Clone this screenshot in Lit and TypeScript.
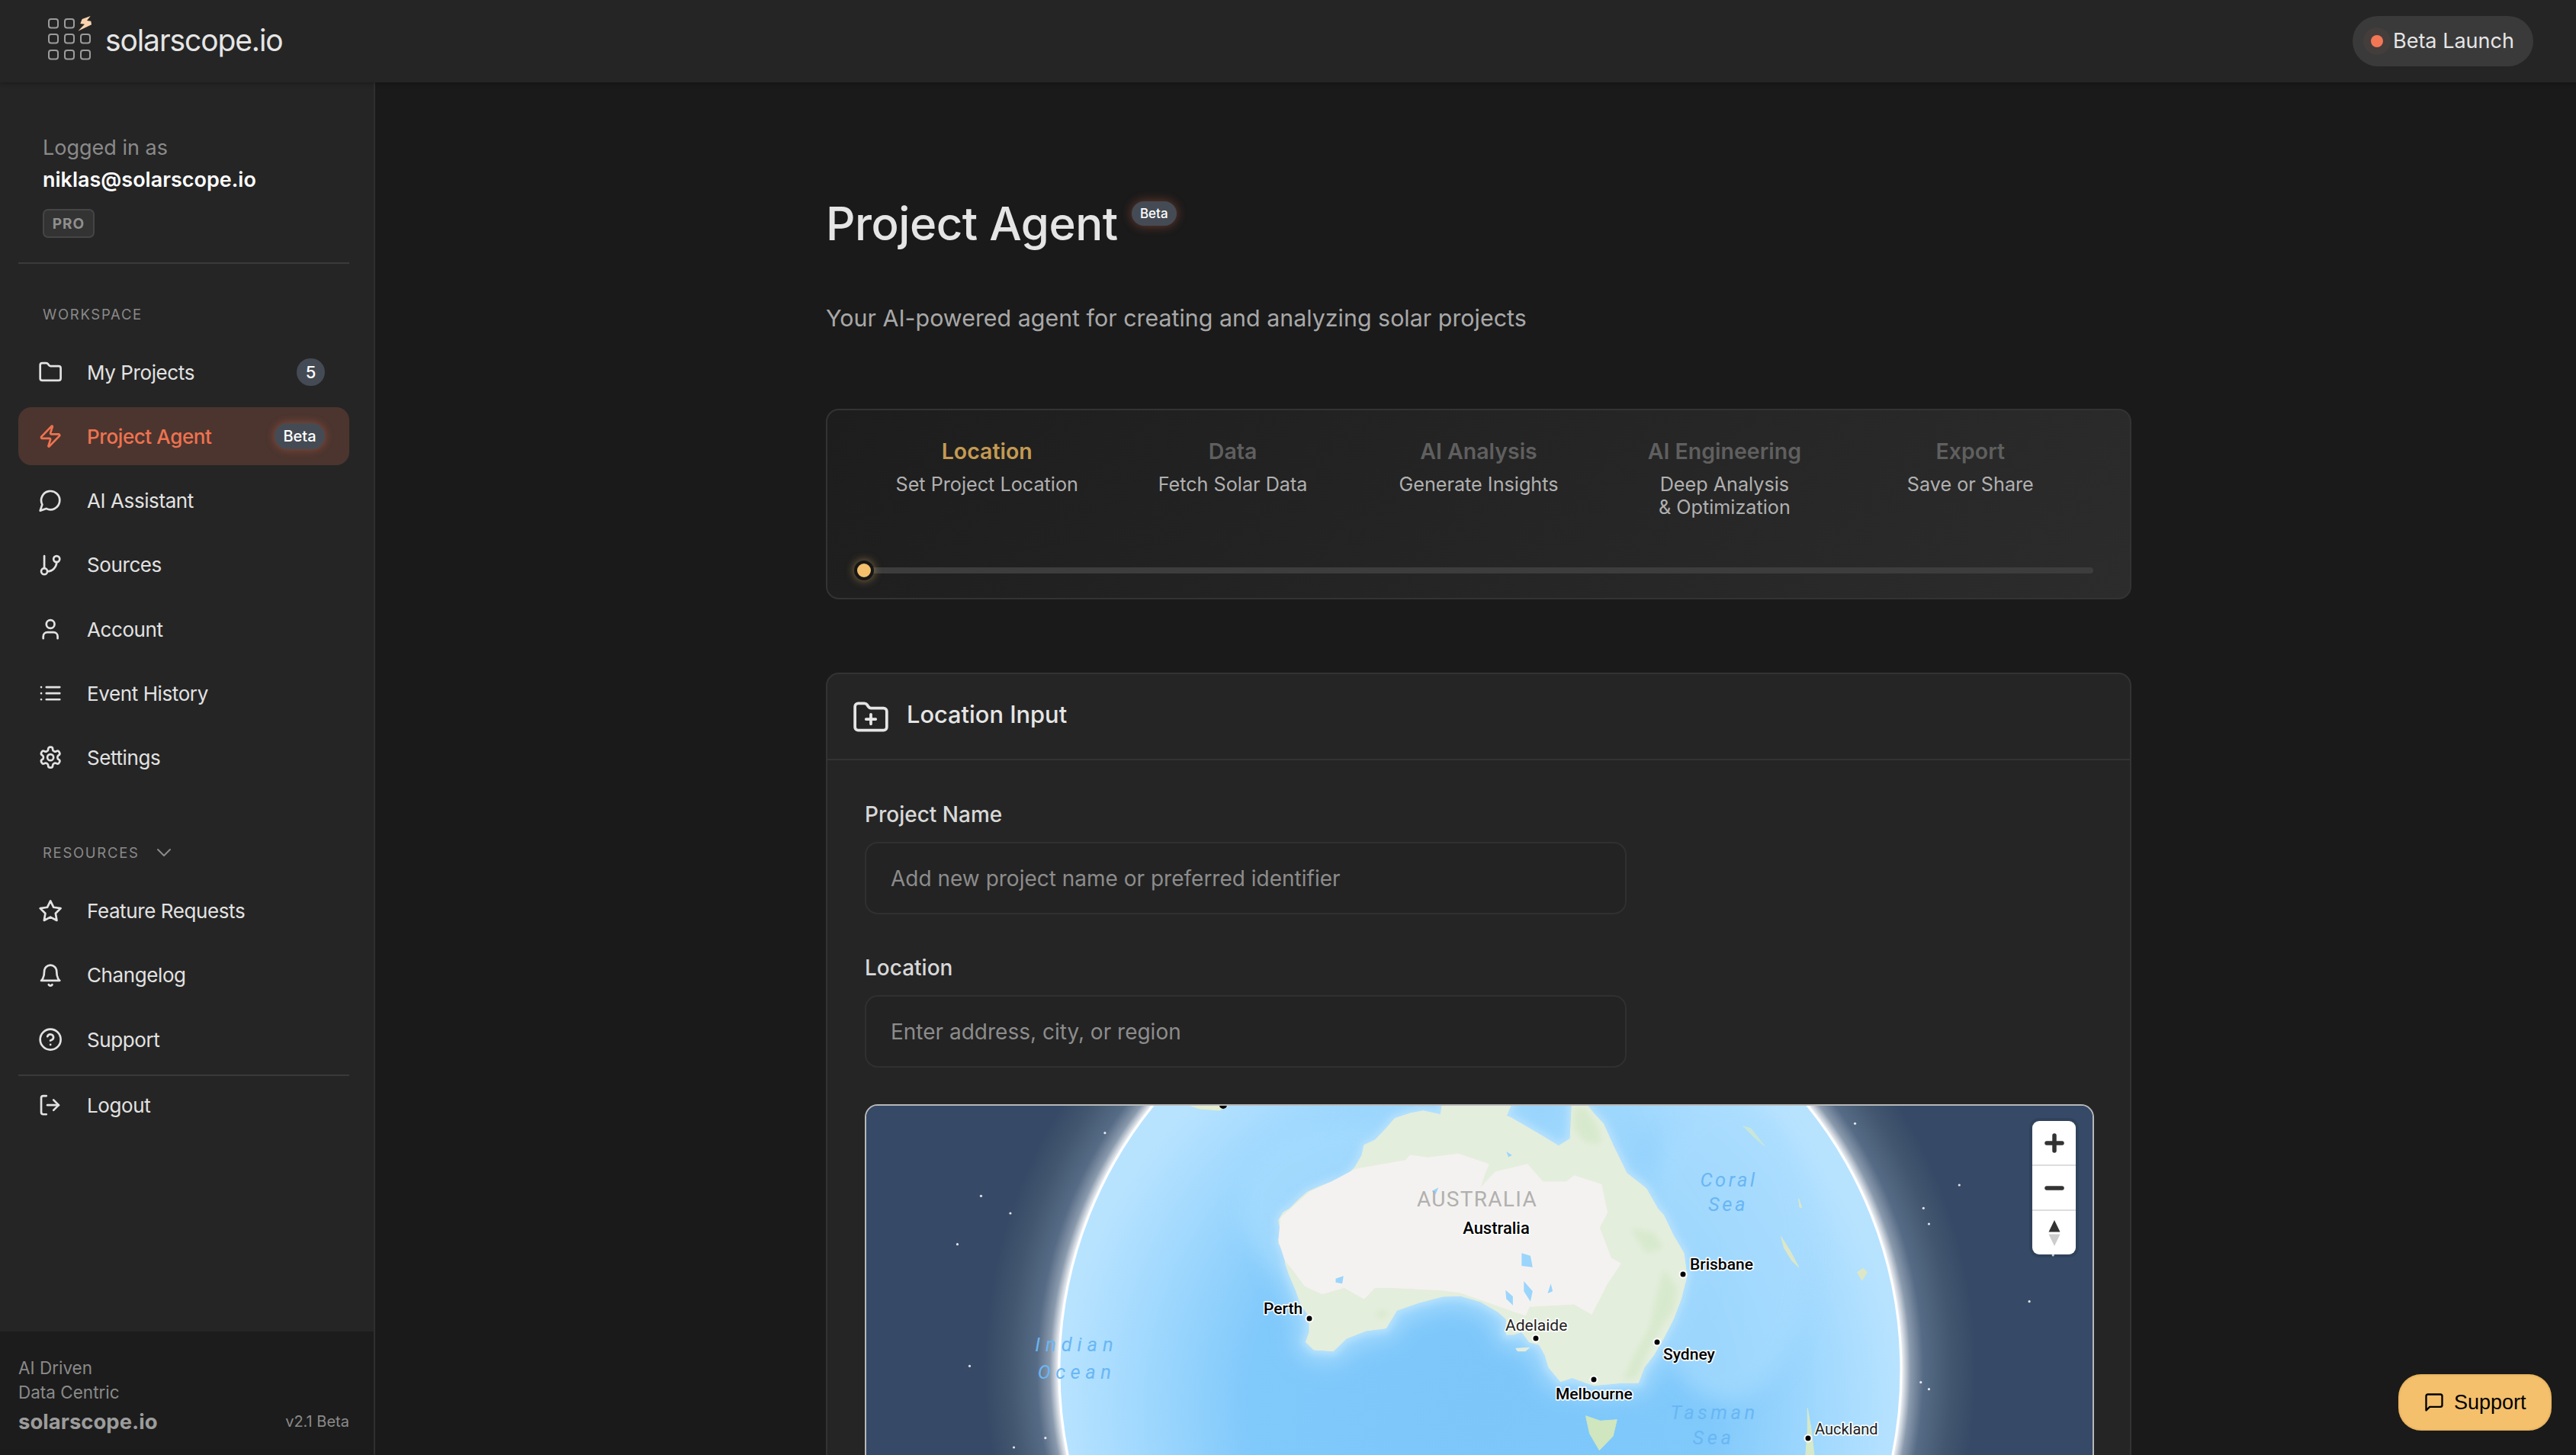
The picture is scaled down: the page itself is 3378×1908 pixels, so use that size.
import { LitElement, html, css, svg } from "lit";
import { customElement } from "lit/decorators.js";

const ic = (body: unknown) => html`<svg class="ic" viewBox="0 0 24 24" fill="none" stroke="currentColor" stroke-width="2" stroke-linecap="round" stroke-linejoin="round">${body}</svg>`;

const icons: Record<string, unknown> = {
  folder: svg`<path d="M20 20a2 2 0 0 0 2-2V8a2 2 0 0 0-2-2h-7.9a2 2 0 0 1-1.69-.9L9.6 3.9A2 2 0 0 0 7.93 3H4a2 2 0 0 0-2 2v13a2 2 0 0 0 2 2Z"/>`,
  zap: svg`<path d="M4 14a1 1 0 0 1-.78-1.63l9.9-10.2a.5.5 0 0 1 .86.46l-1.92 6.02A1 1 0 0 0 13 10h7a1 1 0 0 1 .78 1.63l-9.9 10.2a.5.5 0 0 1-.86-.46l1.92-6.02A1 1 0 0 0 11 14z"/>`,
  chat: svg`<path d="M7.9 20A9 9 0 1 0 4 16.1L2 22Z"/>`,
  branch: svg`<line x1="6" y1="3" x2="6" y2="15"/><circle cx="18" cy="6" r="3"/><circle cx="6" cy="18" r="3"/><path d="M18 9a9 9 0 0 1-9 9"/>`,
  user: svg`<path d="M19 21v-2a4 4 0 0 0-4-4H9a4 4 0 0 0-4 4v2"/><circle cx="12" cy="7" r="4"/>`,
  list: svg`<path d="M3 12h.01M3 18h.01M3 6h.01M8 12h13M8 18h13M8 6h13"/>`,
  gear: svg`<path d="M12.22 2h-.44a2 2 0 0 0-2 2v.18a2 2 0 0 1-1 1.73l-.43.25a2 2 0 0 1-2 0l-.15-.08a2 2 0 0 0-2.73.73l-.22.38a2 2 0 0 0 .73 2.73l.15.1a2 2 0 0 1 1 1.72v.51a2 2 0 0 1-1 1.74l-.15.09a2 2 0 0 0-.73 2.73l.22.38a2 2 0 0 0 2.73.73l.15-.08a2 2 0 0 1 2 0l.43.25a2 2 0 0 1 1 1.73V20a2 2 0 0 0 2 2h.44a2 2 0 0 0 2-2v-.18a2 2 0 0 1 1-1.73l.43-.25a2 2 0 0 1 2 0l.15.08a2 2 0 0 0 2.73-.73l.22-.39a2 2 0 0 0-.73-2.73l-.15-.08a2 2 0 0 1-1-1.74v-.5a2 2 0 0 1 1-1.74l.15-.09a2 2 0 0 0 .73-2.73l-.22-.38a2 2 0 0 0-2.73-.73l-.15.08a2 2 0 0 1-2 0l-.43-.25a2 2 0 0 1-1-1.73V4a2 2 0 0 0-2-2z"/><circle cx="12" cy="12" r="3"/>`,
  star: svg`<polygon points="12 2.5 15.09 8.76 22 9.77 17 14.64 18.18 21.52 12 18.27 5.82 21.52 7 14.64 2 9.77 8.91 8.76"/>`,
  bell: svg`<path d="M6 8a6 6 0 0 1 12 0c0 7 3 9 3 9H3s3-2 3-9"/><path d="M10.3 21a1.94 1.94 0 0 0 3.4 0"/>`,
  help: svg`<circle cx="12" cy="12" r="10"/><path d="M9.09 9a3 3 0 0 1 5.83 1c0 2-3 3-3 3"/><path d="M12 17h.01"/>`,
  logout: svg`<path d="M8 21H5a2 2 0 0 1-2-2V5a2 2 0 0 1 2-2h3"/><polyline points="15 17 20 12 15 7"/><line x1="20" y1="12" x2="9" y2="12"/>`,
};

const workspace = [
  { i: "folder", t: "My Projects", count: "5" },
  { i: "zap", t: "Project Agent", active: true, beta: true },
  { i: "chat", t: "AI Assistant" },
  { i: "branch", t: "Sources" },
  { i: "user", t: "Account" },
  { i: "list", t: "Event History" },
  { i: "gear", t: "Settings" },
];
const resources = [
  { i: "star", t: "Feature Requests" },
  { i: "bell", t: "Changelog" },
  { i: "help", t: "Support" },
];
const steps = [
  { h: "Location", s: ["Set Project Location"], on: true },
  { h: "Data", s: ["Fetch Solar Data"] },
  { h: "AI Analysis", s: ["Generate Insights"] },
  { h: "AI Engineering", s: ["Deep Analysis", "& Optimization"] },
  { h: "Export", s: ["Save or Share"] },
];

// Map geometry is traced from the reference, in two crop coordinate systems.
const a = (p: number[][]) => p.map(([X, Y]) => `${(X / 1.742 - 14).toFixed(1)},${(Y / 3 - 18).toFixed(1)}`).join(" ");
const b = (p: number[][]) => p.map(([X, Y]) => `${(846 + X / 1.96).toFixed(1)},${(Y / 3 - 18).toFixed(1)}`).join(" ");

const landPts = a([[1345,40],[1340,95],[1300,80],[1270,90],[1235,110],[1215,150],[1190,195],[1165,215],[1160,255],[1145,300],[1120,345],[1090,360],[1060,380],[1035,400],[1015,430],[995,465],[980,480],[970,510],[975,560],[970,600],[985,650],[985,680],[995,730],[1010,790],[1020,840],[1040,890],[1040,950],[1032,990],[1050,1020],[1095,1025],[1125,975],[1170,945],[1215,935],[1240,865],[1290,835],[1345,810],[1385,808],[1430,830],[1470,870],[1490,900],[1490,960]])
  + " " + b([[10,960],[30,950],[50,990],[75,1000],[90,1040],[100,1090],[130,1145],[160,1130],[215,1160],[290,1150],[330,1150],[345,1090],[370,1040],[395,975],[420,900],[440,820],[455,730],[447,640],[420,570],[395,490],[380,465],[350,385],[300,325],[265,215],[240,130],[215,90],[190,40],[160,40],[155,190],[125,218],[90,185],[40,140],[0,105]])
  + " " + a([[1490,100],[1505,40]]);
const desertPts = a([[1145,310],[1260,275],[1270,255],[1310,265],[1380,250],[1450,290],[1440,330],[1430,385],[1465,320],[1540,290]])
  + " " + b([[45,290],[85,360],[145,360],[165,335],[235,370],[250,480],[230,540],[260,660],[285,680],[250,760],[210,880],[165,840],[50,850],[40,885]])
  + " " + a([[1500,865],[1385,795],[1340,785],[1225,775],[1190,775],[1165,820],[1120,775],[1070,800],[1030,770],[1000,700],[985,670],[970,590],[975,500],[1040,400],[1090,360]]);
const greenPatches = [
  b([[395,700],[430,780],[420,860],[385,940],[350,1040],[325,1130],[290,1140],[320,1040],[360,930],[375,820]]),
  b([[165,70],[195,70],[225,140],[235,210],[190,200],[165,150]]),
  b([[310,540],[370,560],[395,620],[350,640]]),
  a([[1205,860],[1225,880],[1200,900],[1190,880]]),
];
const lakes = [
  a([[1525,640],[1545,650],[1550,695],[1525,690]]),
  a([[1530,750],[1550,790],[1545,830],[1530,790]]),
  a([[1488,785],[1505,810],[1505,845],[1490,820]]),
  a([[1100,740],[1118,730],[1115,760],[1100,755]]),
  a([[1320,395],[1335,382],[1328,410]]),
  a([[1490,240],[1503,255],[1495,262]]),
  b([[105,760],[110,790],[97,798]]),
];
const islands = [
  { p: b([[195,1280],[232,1300],[275,1295],[265,1360],[230,1415],[205,1350]]), c: "#cfe6bf" },
  { p: b([[15,1015],[50,1012],[40,1025],[20,1025]]), c: "#e4eedd" },
  { p: b([[765,1250],[775,1340],[782,1434],[760,1434],[765,1340]]), c: "#d6e9c8" },
  { p: b([[697,575],[720,630],[742,695],[725,670],[705,620]]), c: "#dde7c6" },
  { p: b([[893,715],[908,700],[918,715],[905,748]]), c: "#dde7c6" },
  { p: b([[742,425],[750,460],[745,460]]), c: "#dde7c6" },
  { p: b([[600,140],[620,150],[655,220],[625,180]]), c: "#c9e6d8" },
  { p: a([[760,55],[860,55],[835,78],[790,72]]), c: "#e4eed0" },
];
const stars = [
  ...[[573,167],[290,415],[357,483],[236,605],[264,1084],[437,1367],[365,1404]].map(([X, Y]) => [X / 1.742 - 14, Y / 3 - 18]),
  ...[[887,130],[1155,372],[1063,463],[1077,525],[1396,648],[1335,830],[1056,1148],[1077,1175]].map(([X, Y]) => [846 + X / 1.96, Y / 3 - 18]),
];
const O = (x: number, y: number) => [x - 1134, y - 1448];
const cities = [
  { n: "Australia", x: 1962, y: 1610, a: "middle", dot: null, s: 22 },
  { n: "Perth", x: 1657, y: 1715, a: "start", dot: [1717, 1729], s: 21 },
  { n: "Adelaide", x: 1974, y: 1737, a: "start", dot: [2014, 1755], s: 21, soft: true },
  { n: "Brisbane", x: 2216, y: 1657, a: "start", dot: [2207, 1671], s: 21 },
  { n: "Sydney", x: 2181, y: 1775, a: "start", dot: [2173, 1760], s: 21 },
  { n: "Melbourne", x: 2040, y: 1827, a: "start", dot: [2090, 1809], s: 21 },
  { n: "Auckland", x: 2380, y: 1873, a: "start", dot: [2371, 1886], s: 20, soft: true },
];
const seas = [
  { n: "Indian", x: 1412, y: 1763, l: 7 }, { n: "Ocean", x: 1412, y: 1799, l: 6.5 },
  { n: "Coral", x: 2267, y: 1547, l: 3.5 }, { n: "Sea", x: 2266, y: 1579, l: 3.5 },
  { n: "Tasman", x: 2248, y: 1852, l: 4.5 }, { n: "Sea", x: 2247, y: 1885, l: 4.5 },
];

@customElement("app-root")
export class AppRoot extends LitElement {
  static styles = css`
    :host { display: flex; flex-direction: column; position: relative; width: 100vw; height: 100vh; overflow: hidden; background: #1a1a1a; font-family: Inter, "Liberation Sans", sans-serif; color: #e5e5e5; }
    * { box-sizing: border-box; }
    .top { flex: none; height: 108px; background: #252525; display: flex; align-items: center; justify-content: space-between; padding: 0 56px 0 62px; box-shadow: 0 2px 6px rgba(0,0,0,.25); position: relative; z-index: 2; }
    .brand { display: flex; align-items: center; gap: 18px; }
    .logo { width: 58px; height: 60px; display: block; margin-top: -6px; }
    .name { font-size: 39px; letter-spacing: -1.1px; line-height: 48px; color: #e5e5e5; margin-top: -2px; }
    .launch { display: flex; align-items: center; height: 66px; width: 237px; border-radius: 33px; background: #3a3a3a; padding-left: 14px; gap: 3px; }
    .halo { width: 36px; height: 36px; border-radius: 50%; background: rgba(243,119,85,.05); display: flex; align-items: center; justify-content: center; }
    .halo i { width: 16px; height: 16px; border-radius: 50%; background: #f37755; display: block; }
    .launch span { font-size: 27px; color: #e5e5e5; margin-top: -1px; }
    .body { flex: 1; display: flex; min-height: 0; }
    aside { flex: none; width: 492px; background: #252525; border-right: 2px solid #2f2f2f; display: flex; flex-direction: column; }
    .who { padding: 64px 0 0 56px; }
    .who .l { font-size: 27px; line-height: 44px; color: #8a8a8a; }
    .who .e { font-size: 27px; line-height: 40px; color: #fff; font-weight: 600; }
    .pro { margin-top: 18px; width: 68px; height: 38px; border-radius: 7px; border: 2px solid #454545; background: #333; color: #8f8f8f; font-size: 19px; font-weight: 700; letter-spacing: 1px; display: flex; align-items: center; justify-content: center; }
    .rule { height: 2px; background: #3a3a3a; margin: 0 32px 0 24px; flex: none; }
    .head { font-size: 18.5px; line-height: 24px; letter-spacing: 1.7px; color: #8a8a8a; padding-left: 56px; display: flex; align-items: center; gap: 20px; }
    .head svg { width: 24px; height: 24px; }
    nav { display: flex; flex-direction: column; gap: 8.25px; }
    .row { height: 76px; margin: 0 32px 0 24px; padding: 0 32px 0 26px; border-radius: 17px; display: flex; align-items: center; font-size: 26px; letter-spacing: -0.4px; color: #e2e2e2; flex: none; }
    .row.on { background: #4c352f; color: #ee7350; font-weight: 500; }
    .row .ic { flex: none; width: 32.3px; height: 32.3px; margin-right: 31.7px; }
    .row span { flex: 1; }
    .row b { font-weight: 500; color: #fff; background: #454b54; border-radius: 18px; display: flex; align-items: center; justify-content: center; letter-spacing: 0; }
    .count { width: 37px; height: 36px; font-size: 22px; }
    .row .beta { width: 66px; height: 34px; font-size: 20px; box-shadow: 0 0 12px rgba(238,115,80,.4); }
    .foot { margin-top: auto; height: 162px; background: #1c1c1c; padding: 32px 32px 0 24px; color: #8a8a8a; font-size: 22.5px; line-height: 32px; }
    .foot .b { display: flex; justify-content: space-between; align-items: center; margin-top: 2px; line-height: 40px; }
    .foot strong { font-size: 27.5px; color: #9c9c9c; font-weight: 700; }
    .foot small { font-size: 20px; }
    main { flex: 1; min-width: 0; padding: 150px 0 0 591px; }
    .col { width: 1712px; }
    .title { display: flex; align-items: flex-start; gap: 18px; }
    h1 { margin: 0; font-size: 60px; letter-spacing: -0.5px; line-height: 70px; font-weight: 500; color: #e5e5e5; }
    .tbeta { margin-top: 6px; width: 59px; height: 32px; border-radius: 16px; background: #454b54; color: #fff; font-size: 17px; font-weight: 500; display: flex; align-items: center; justify-content: center; box-shadow: 0 0 14px rgba(238,115,80,.4); }
    .sub { margin: 67px 0 0; font-size: 30.4px; line-height: 44px; color: #a8a8a8; }
    .steps { margin-top: 97px; height: 250px; border: 2px solid #333; border-radius: 17px; background: linear-gradient(135deg, #1d1d1d, #2c2c2c); padding: 36px 48px 0 48px; display: flex; flex-direction: column; }
    .grid { display: grid; grid-template-columns: repeat(5, 1fr); height: 170px; text-align: center; }
    .st { font-size: 28.5px; line-height: 36px; font-weight: 600; color: #5f5f5f; margin-bottom: 10px; }
    .st.on { color: #c49a52; }
    .ss { font-size: 25.2px; line-height: 30px; color: #b0b0b0; }
    .track { position: relative; height: 8px; border-radius: 4px; background: #3d3d3d; margin-top: 0; }
    .dot { position: absolute; left: -13px; top: -9px; width: 26px; height: 26px; border-radius: 50%; background: #f4c06c; border: 4px solid #161616; box-shadow: 0 0 12px rgba(244,192,108,.5); }
    .card { margin-top: 96px; border: 2px solid #333; border-radius: 17px 17px 0 0; background: #252525; height: 1100px; }
    .chead { height: 113px; border-bottom: 2px solid #333; display: flex; align-items: center; padding-left: 32px; gap: 22px; }
    .chead svg { width: 50px; height: 50px; stroke-width: 1.8; color: #e5e5e5; margin-top: 2px; }
    .chead span { font-size: 30.8px; font-weight: 500; color: #e5e5e5; margin-top: -6px; }
    .cbody { padding: 53px 0 0 49px; }
    label { display: block; font-size: 28px; line-height: 36px; font-weight: 500; color: #d8d8d8; margin-bottom: 18px; }
    input { display: block; width: 999px; height: 95px; border: 2px solid #303030; border-radius: 17px; background: #232323; padding: 0 32px; font: 28px Inter, sans-serif; color: #e5e5e5; margin-bottom: 52px; outline: none; }
    input::placeholder { color: #8c8c8c; opacity: 1; }
    .map { position: relative; width: 1612px; height: 520px; margin-top: -4px; border: 2px solid #b8b8b8; border-bottom: 0; border-radius: 17px 17px 0 0; overflow: hidden; background: #364a67; }
    .map > svg { display: block; position: absolute; left: -2px; top: -2px; width: 1612px; height: 520px; }
    .ctl { position: absolute; left: 1529px; top: 20px; width: 57px; height: 175px; background: #fff; border-radius: 9px; box-shadow: 0 0 0 4px rgba(0,0,0,.1); display: flex; flex-direction: column; }
    .ctl div { flex: 1; display: flex; align-items: center; justify-content: center; }
    .ctl div + div { border-top: 2px solid #ddd; }
    .ctl svg { display: block; }
    .fab { position: absolute; right: 32px; bottom: 32px; width: 201px; height: 74px; border: 0; border-radius: 30px; background: #f4c06c; color: #000; display: flex; align-items: center; padding: 0 0 0 33px; gap: 12px; font: 27px "Liberation Sans", Arial, sans-serif; box-shadow: inset 0 0 3px rgba(150,100,20,.45); }
    .fab svg { width: 28px; height: 28px; }
    .mlabel { font-family: Roboto, "Liberation Sans", sans-serif; }
  `;

  private navRow(r: any) {
    return html`<div class="row ${r.active ? "on" : ""}">
      ${ic(icons[r.i])}<span>${r.t}</span>
      ${r.count ? html`<b class="count">${r.count}</b>` : ""}
      ${r.beta ? html`<b class="beta">Beta</b>` : ""}
    </div>`;
  }

  private map() {
    return html`<svg viewBox="0 0 1612 520">
      <defs>
        <radialGradient id="glow" gradientUnits="userSpaceOnUse" cx="807" cy="349" r="650">
          <stop offset="0.849" stop-color="#ffffff"/>
          <stop offset="0.855" stop-color="#d8dee5"/>
          <stop offset="0.868" stop-color="#8a9aad"/>
          <stop offset="0.894" stop-color="#566b85"/>
          <stop offset="0.95" stop-color="#42566f"/>
          <stop offset="1" stop-color="#364a67"/>
        </radialGradient>
        <radialGradient id="sea" gradientUnits="userSpaceOnUse" cx="807" cy="400" r="552">
          <stop offset="0" stop-color="#7cc6fa"/>
          <stop offset="0.55" stop-color="#80c9fb"/>
          <stop offset="0.82" stop-color="#a2d9fe"/>
          <stop offset="1" stop-color="#b8e3ff"/>
        </radialGradient>
        <filter id="b14" x="-20%" y="-20%" width="140%" height="140%"><feGaussianBlur stdDeviation="14"/></filter>
        <filter id="b4" x="-20%" y="-20%" width="140%" height="140%"><feGaussianBlur stdDeviation="4"/></filter>
        <clipPath id="globe"><circle cx="807" cy="349" r="552"/></clipPath>
      </defs>
      <rect width="1612" height="520" fill="#364a67"/>
      <circle cx="807" cy="349" r="650" fill="url(#glow)"/>
      ${stars.map(([x, y]) => svg`<circle cx="${x}" cy="${y}" r="1.6" fill="#fff" opacity=".85"/>`)}
      <g clip-path="url(#globe)">
        <circle cx="807" cy="349" r="552" fill="url(#sea)"/>
        <ellipse cx="640" cy="130" rx="150" ry="110" fill="#a4dbfe" filter="url(#b14)" opacity=".8"/>
        <ellipse cx="1130" cy="190" rx="110" ry="200" fill="#a8dcfe" filter="url(#b14)" opacity=".7"/>
        <polygon points="${landPts}" fill="#a0d8fd" stroke="#a0d8fd" stroke-width="34" stroke-linejoin="round" filter="url(#b14)"/>
        <polygon points="${landPts}" fill="#b6e1fd" stroke="#b6e1fd" stroke-width="10" stroke-linejoin="round" filter="url(#b4)"/>
        <polygon points="${landPts}" fill="#e4eedd" stroke="#e4eedd" stroke-width="1" stroke-linejoin="round"/>
        ${greenPatches.map((p) => svg`<polygon points="${p}" fill="#d4e8c9" filter="url(#b4)" opacity=".8"/>`)}
        <polygon points="${desertPts}" fill="#f4f2f0" stroke="#f4f2f0" stroke-linejoin="round"/>
        ${lakes.map((p) => svg`<polygon points="${p}" fill="#9ad5fc"/>`)}
        ${islands.map((i) => svg`<polygon points="${i.p}" fill="${i.c}" stroke="${i.c}" stroke-linejoin="round"/>`)}
        <circle cx="${O(1604, 0)[0]}" cy="1" r="5" fill="#000"/>
      </g>
      <circle cx="807" cy="349" r="552" fill="none" stroke="#fff" stroke-width="3"/>
      <text class="mlabel" x="${O(1937, 0)[0]}" y="${O(0, 1582)[1]}" text-anchor="middle" font-size="28" fill="#b1b0af" letter-spacing="1.3">AUSTRALIA</text>
      ${seas.map((s) => {
        const [x, y] = O(s.x, s.y);
        return svg`<text class="mlabel" x="${x}" y="${y + 9}" text-anchor="middle" font-size="25.5" font-style="italic" fill="#69b6f4" letter-spacing="${s.l}">${s.n}</text>`;
      })}
      ${cities.map((c) => {
        const [x, y] = O(c.x, c.y);
        const d = c.dot ? O(c.dot[0], c.dot[1]) : null;
        return svg`
          ${d ? svg`<circle cx="${d[0]}" cy="${d[1]}" r="4.5" fill="#000" stroke="#fff" stroke-width="2"/>` : ""}
          <text class="mlabel" x="${x}" y="${y + 8}" text-anchor="${c.a}" font-size="${c.s}" font-weight="${c.soft ? 400 : 500}" fill="${c.soft ? "#222" : "#000"}" stroke="#fff" stroke-width="3.5" stroke-opacity=".9" paint-order="stroke" stroke-linejoin="round">${c.n}</text>`;
      })}
    </svg>
    <div class="ctl">
      <div><svg width="26" height="26" viewBox="0 0 26 26"><path d="M13 3v20M3 13h20" stroke="#333" stroke-width="5.5" stroke-linecap="round"/></svg></div>
      <div><svg width="26" height="26" viewBox="0 0 26 26"><path d="M3 13h20" stroke="#333" stroke-width="5.5" stroke-linecap="round"/></svg></div>
      <div><svg width="18" height="36" viewBox="0 0 18 36"><path d="M9 1l7.5 15.5h-15z" fill="#333"/><path d="M9 35L1.5 19.500h15z" fill="#ccc"/></svg></div>
    </div>`;
  }

  render() {
    return html`
      <header class="top">
        <div class="brand">
          <svg class="logo" viewBox="0 0 58 60">
            ${[[2,4],[23,4],[2,24],[23,24],[44,24],[2,45],[23,45],[44,45]].map(([x, y]) => svg`<rect x="${x}" y="${y}" width="12" height="11.500" rx="3" fill="none" stroke="#9c9c9c" stroke-width="2"/>`)}
            <polygon points="56.700,0 45.700,4 43.300,10 49,10.700 40.300,19.700 58,11.300 57.300,6.700 52,6" fill="#f9d3ae"/>
          </svg>
          <div class="name">solarscope.io</div>
        </div>
        <div class="launch"><div class="halo"><i></i></div><span>Beta Launch</span></div>
      </header>
      <div class="body">
        <aside>
          <div class="who">
            <div class="l">Logged in as</div>
            <div class="e">niklas@solarscope.io</div>
            <div class="pro">PRO</div>
          </div>
          <div class="rule" style="margin-top:32px"></div>
          <div class="head" style="margin-top:54px">WORKSPACE</div>
          <nav style="margin-top:26px">${workspace.map((r) => this.navRow(r))}</nav>
          <div class="head" style="margin-top:74px">RESOURCES
            <svg viewBox="0 0 24 24" fill="none" stroke="#8a8a8a" stroke-width="2" stroke-linecap="round" stroke-linejoin="round"><path d="M4 8l8 8 8-8"/></svg>
          </div>
          <nav style="margin-top:27px">${resources.map((r) => this.navRow(r))}</nav>
          <div class="rule" style="margin-top:8px"></div>
          <div class="row" style="margin-top:0">${ic(icons.logout)}<span>Logout</span></div>
          <div class="foot">
            <div>AI Driven</div>
            <div>Data Centric</div>
            <div class="b"><strong>solarscope.io</strong><small>v2.1 Beta</small></div>
          </div>
        </aside>
        <main>
          <div class="col">
            <div class="title"><h1>Project Agent</h1><div class="tbeta">Beta</div></div>
            <p class="sub">Your AI-powered agent for creating and analyzing solar projects</p>
            <section class="steps">
              <div class="grid">
                ${steps.map((s) => html`<div>
                  <div class="st ${s.on ? "on" : ""}">${s.h}</div>
                  ${s.s.map((l) => html`<div class="ss">${l}</div>`)}
                </div>`)}
              </div>
              <div class="track"><div class="dot"></div></div>
            </section>
            <section class="card">
              <div class="chead">
                <svg viewBox="0 0 24 24" fill="none" stroke="currentColor" stroke-linecap="round" stroke-linejoin="round"><path d="M12 10v6M9 13h6M20 20a2 2 0 0 0 2-2V8a2 2 0 0 0-2-2h-7.900a2 2 0 0 1-1.690-.9L9.600 3.900A2 2 0 0 0 7.930 3H4a2 2 0 0 0-2 2v13a2 2 0 0 0 2 2Z"/></svg>
                <span>Location Input</span>
              </div>
              <div class="cbody">
                <label>Project Name</label>
                <input placeholder="Add new project name or preferred identifier" />
                <label>Location</label>
                <input placeholder="Enter address, city, or region" />
                <div class="map">${this.map()}</div>
              </div>
            </section>
          </div>
        </main>
      </div>
      <button class="fab"><svg viewBox="0 0 24 24" fill="none" stroke="currentColor" stroke-width="2" stroke-linejoin="round"><path d="M21 15a2 2 0 0 1-2 2H7l-4 4V5a2 2 0 0 1 2-2h14a2 2 0 0 1 2 2z"/></svg>Support</button>
    `;
  }
}
